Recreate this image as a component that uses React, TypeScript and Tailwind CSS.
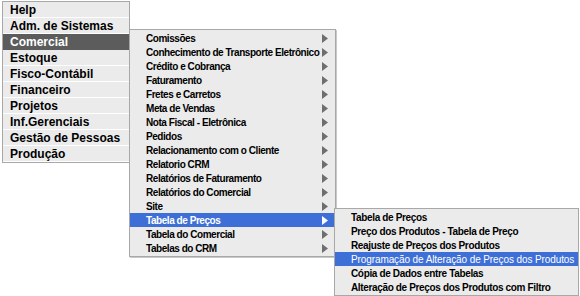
const mainItems = [
  "Help",
  "Adm. de Sistemas",
  "Comercial",
  "Estoque",
  "Fisco-Contábil",
  "Financeiro",
  "Projetos",
  "Inf.Gerenciais",
  "Gestão de Pessoas",
  "Produção",
];

const comercialItems = [
  "Comissões",
  "Conhecimento de Transporte Eletrônico",
  "Crédito e Cobrança",
  "Faturamento",
  "Fretes e Carretos",
  "Meta de Vendas",
  "Nota Fiscal - Eletrônica",
  "Pedidos",
  "Relacionamento com o Cliente",
  "Relatorio CRM",
  "Relatórios de Faturamento",
  "Relatórios do Comercial",
  "Site",
  "Tabela de Preços",
  "Tabela do Comercial",
  "Tabelas do CRM",
];

const precoItems = [
  "Tabela de Preços",
  "Preço dos Produtos - Tabela de Preço",
  "Reajuste de Preços dos Produtos",
  "Programação de Alteração de Preços dos Produtos",
  "Cópia de Dados entre Tabelas",
  "Alteração de Preços dos Produtos com Filtro",
];

function Arrow({ active }: { active: boolean }) {
  return (
    <svg width="6" height="9" viewBox="0 0 6 9" className="shrink-0">
      <path d="M0 0 L6 4.5 L0 9 Z" fill={active ? "#ffffff" : "#6e6e6e"} />
    </svg>
  );
}

export default function App() {
  return (
    <div className="relative h-[296px] w-[580px] overflow-hidden bg-white font-['Liberation_Sans',Arial,sans-serif] font-bold text-black">
      <div className="ml-[2px] mt-[1px] w-[128px] border border-[#a8a8a8] bg-[#ebebeb]">
        {mainItems.map((item) => (
          <div
            key={item}
            className={
              item === "Comercial"
                ? "flex h-4 items-center border-b border-[#5c5c5c] bg-[#5c5c5c] pl-[7px] pt-px text-[12px] text-white"
                : "flex h-4 items-center border-b border-white pl-[7px] pt-px text-[12px]"
            }
          >
            {item}
          </div>
        ))}
      </div>

      <div className="absolute left-[129px] top-[29px] w-[207px] border border-[#a8a8a8] bg-[#ebebeb] py-px shadow-[1px_1px_0_#c8c8c8]">
        {comercialItems.map((item) => {
          const active = item === "Tabela de Preços";
          return (
            <div
              key={item}
              className={
                active
                  ? "flex h-[14px] items-center justify-between whitespace-nowrap bg-[#3e6fd6] pl-[16px] pr-[7px] text-[10px] tracking-[-0.45px] text-white"
                  : "flex h-[14px] items-center justify-between whitespace-nowrap pl-[16px] pr-[7px] text-[10px] tracking-[-0.45px]"
              }
            >
              <span>{item}</span>
              <Arrow active={active} />
            </div>
          );
        })}
      </div>

      <div className="absolute left-[334px] top-[208px] w-[245px] border border-[#a8a8a8] bg-[#ebebeb] py-px">
        {precoItems.map((item) => {
          const active = item === "Programação de Alteração de Preços dos Produtos";
          return (
            <div
              key={item}
              className={
                active
                  ? "flex h-[14px] items-center whitespace-nowrap bg-[#3e6fd6] pl-[16px] text-[10px] font-normal tracking-[-0.1px] text-white"
                  : "flex h-[14px] items-center whitespace-nowrap pl-[16px] text-[10px] tracking-[-0.35px]"
              }
            >
              {item}
            </div>
          );
        })}
      </div>
    </div>
  );
}
